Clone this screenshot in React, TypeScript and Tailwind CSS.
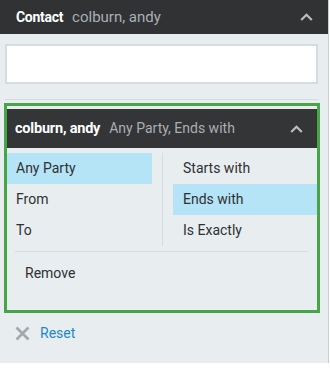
import React from "react";

const Chevron = ({ className }: { className?: string }) => (
  <svg width="13" height="8" viewBox="0 0 13 8" className={className}>
    <path d="M1.2 7 L6.5 1.7 L11.8 7" fill="none" stroke="currentColor" strokeWidth="2.2" />
  </svg>
);

export default function App() {
  return (
    <div className="w-[330px] h-[373px] bg-white" style={{ fontFamily: "Roboto, 'Liberation Sans', sans-serif" }}>
      <div className="w-[329px] h-[363px] bg-[#e8edf0] border-r border-[#c9ced2] flex flex-col">
        <div className="h-[34px] bg-[#313234] flex items-center pl-4 pr-[15px] shrink-0">
          <span className="text-white font-bold text-[14px] tracking-[-0.3px]">Contact</span>
          <span className="ml-[9px] text-[#a9afb4] text-[15px]">colburn, andy</span>
          <Chevron className="ml-auto text-[#b9bec2]" />
        </div>
        <div className="pl-[5px] pr-[10px] pt-[10px]">
          <div className="h-[40px] bg-white border-2 border-[#d4dce2]" />
          <div className="mt-[15px] h-px bg-[#d4dce2]" />
        </div>
        <div className="ml-[4px] mt-[3px] w-[316px] h-[210px] border-[3px] border-[#46a546] flex flex-col pt-[3px]">
          <div className="h-[39px] bg-[#343537] flex items-center pl-[8px] pr-[14px] shrink-0">
            <span className="text-white font-bold text-[14.5px] tracking-[-0.2px]">colburn, andy</span>
            <span className="ml-[9px] text-[#a9afb4] text-[14px]">Any Party, Ends with</span>
            <Chevron className="ml-auto text-[#b9bec2]" />
          </div>
          <div className="flex mt-[5px] text-[14px] text-[#2f3133]">
            <div className="w-[145px] flex flex-col">
              <div className="h-[31px] flex items-center pl-[9px] bg-[#b5e4f6]">Any Party</div>
              <div className="h-[31px] flex items-center pl-[9px]">From</div>
              <div className="h-[31px] flex items-center pl-[9px]">To</div>
            </div>
            <div className="ml-[10px] w-px bg-[#d4dce2]" />
            <div className="ml-[10px] flex-1 flex flex-col">
              <div className="h-[31px] flex items-center pl-[10px]">Starts with</div>
              <div className="h-[31px] flex items-center pl-[10px] bg-[#b5e4f6]">Ends with</div>
              <div className="h-[31px] flex items-center pl-[10px]">Is Exactly</div>
            </div>
          </div>
          <div className="mt-[5px] ml-[8px] mr-[9px] h-px bg-[#d4dce2]" />
          <div className="pl-[18px] mt-[11px] text-[14px] text-[#2f3133] leading-[20px]">Remove</div>
        </div>
        <div className="flex items-center mt-[10px] pl-[15px]">
          <svg width="15" height="15" viewBox="0 0 15 15">
            <path d="M1.5 1.5 L13.5 13.5 M13.5 1.5 L1.5 13.5" stroke="#a3a8ac" strokeWidth="2.6" />
          </svg>
          <span className="ml-[10px] text-[14px] text-[#1c87c9]">Reset</span>
        </div>
      </div>
    </div>
  );
}
